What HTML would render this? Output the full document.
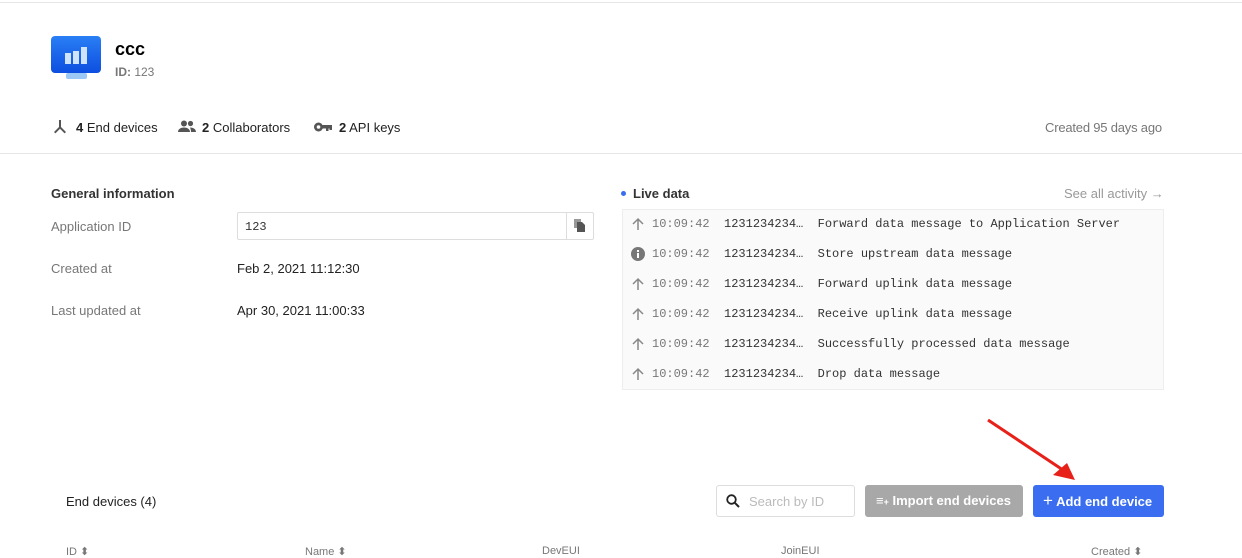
<!DOCTYPE html>
<html><head><meta charset="utf-8"><style>
*{margin:0;padding:0;box-sizing:border-box}
body{width:1242px;height:558px;overflow:hidden;background:#fff;font-family:"Liberation Sans",sans-serif;color:#222;position:relative}
.a{position:absolute;white-space:nowrap}
.mono{font-family:"Liberation Mono",monospace;font-size:12px;color:#333;white-space:pre}
.g{color:#777}
</style></head><body>
<div class="a" style="left:0;top:2px;width:1242px;height:1px;background:#e6e6e6"></div>
<div class="a" style="left:0;top:153px;width:1242px;height:1px;background:#e6e6e6"></div>
<svg class="a" style="left:51px;top:36px" width="51" height="44" viewBox="0 0 51 44">
<defs><linearGradient id="b" x1="0" y1="0" x2="0" y2="1"><stop offset="0" stop-color="#2a7ff5"/><stop offset="1" stop-color="#0d4ee0"/></linearGradient></defs>
<rect x="0" y="0" width="50" height="37" rx="4" fill="url(#b)"/>
<rect x="15" y="37" width="21" height="6" rx="2" fill="#9cc8f5"/>
<rect x="14" y="17" width="6" height="11" fill="#cfe3fb"/><rect x="22" y="15" width="6" height="13" fill="#cfe3fb"/><rect x="30" y="11" width="6" height="17" fill="#cfe3fb"/>
</svg>
<div class="a" style="left:115px;top:39px;font-size:18px;font-weight:bold;color:#000">ccc</div>
<div class="a g" style="left:115px;top:65px;font-size:12px"><b>ID:</b> 123</div>
<svg class="a" style="left:52px;top:119px" width="16" height="16" viewBox="0 0 16 16" fill="#555"><rect x="7" y="1" width="2" height="7"/><path d="M7 8L2 13l1.4 1.4L8 9.8l4.6 4.6L14 13 9 8z"/></svg>
<div class="a" style="left:76px;top:120px;font-size:13px"><b>4</b> End devices</div>
<svg class="a" style="left:178px;top:120px" width="18" height="13" viewBox="0 0 18 13" fill="#555"><circle cx="6" cy="3.5" r="3"/><circle cx="12.5" cy="3.5" r="2.6"/><path d="M0 12c0-3 3-4.5 6-4.5s6 1.5 6 4.5z"/><path d="M12 7.5c3 0 6 1.5 6 4.5h-5c0-2-0.5-3.3-1-4.5z"/></svg>
<div class="a" style="left:202px;top:120px;font-size:13px"><b>2</b> Collaborators</div>
<svg class="a" style="left:314px;top:122px" width="18" height="10" viewBox="0 0 18 10" fill="#555"><circle cx="4.5" cy="5" r="4.5"/><circle cx="4.5" cy="5" r="1.8" fill="#fff"/><rect x="8" y="3" width="10" height="3.5"/><rect x="12" y="5" width="2.5" height="4"/><rect x="15.5" y="5" width="2.5" height="3"/></svg>
<div class="a" style="left:339px;top:120px;font-size:13px"><b>2</b> API keys</div>
<div class="a g" style="left:1045px;top:120px;font-size:13px;letter-spacing:-0.2px">Created 95 days ago</div>

<div class="a" style="left:51px;top:186px;font-size:13px;font-weight:bold;color:#333">General information</div>
<div class="a g" style="left:51px;top:219px;font-size:13px">Application ID</div>
<div class="a" style="left:237px;top:212px;width:357px;height:28px;border:1px solid #ddd;border-radius:2px"></div>
<div class="a" style="left:566px;top:213px;width:1px;height:26px;background:#ddd"></div>
<div class="a mono" style="left:245px;top:220px">123</div>
<svg class="a" style="left:574px;top:219px" width="11" height="13" viewBox="0 0 11 13" fill="#555"><rect x="0" y="0" width="7" height="9" fill="#999"/><path d="M3 3h5l3 3v7H3z"/></svg>
<div class="a g" style="left:51px;top:261px;font-size:13px">Created at</div>
<div class="a" style="left:237px;top:261px;font-size:13px">Feb 2, 2021 11:12:30</div>
<div class="a g" style="left:51px;top:303px;font-size:13px">Last updated at</div>
<div class="a" style="left:237px;top:303px;font-size:13px">Apr 30, 2021 11:00:33</div>

<div class="a" style="left:621px;top:191px;width:5px;height:5px;border-radius:50%;background:#3a6df0"></div>
<div class="a" style="left:633px;top:186px;font-size:13px;font-weight:bold;color:#333">Live data</div>
<div class="a" style="left:1064px;top:186px;font-size:13px;color:#999">See all activity →</div>
<div class="a" style="left:622px;top:209px;width:542px;height:181px;background:#fafafa;border:1px solid #eee"></div>

<svg class="a" style="left:631px;top:217px" width="14" height="14" viewBox="0 0 14 14"><path d="M7 13V2M2 7l5-5 5 5" stroke="#888" stroke-width="1.5" fill="none"/></svg>
<svg class="a" style="left:631px;top:247px" width="14" height="14" viewBox="0 0 14 14"><circle cx="7" cy="7" r="7" fill="#777"/><rect x="6" y="6" width="2" height="5" fill="#fff"/><rect x="6" y="3" width="2" height="2" fill="#fff"/></svg>
<svg class="a" style="left:631px;top:277px" width="14" height="14" viewBox="0 0 14 14"><path d="M7 13V2M2 7l5-5 5 5" stroke="#888" stroke-width="1.5" fill="none"/></svg>
<svg class="a" style="left:631px;top:307px" width="14" height="14" viewBox="0 0 14 14"><path d="M7 13V2M2 7l5-5 5 5" stroke="#888" stroke-width="1.5" fill="none"/></svg>
<svg class="a" style="left:631px;top:337px" width="14" height="14" viewBox="0 0 14 14"><path d="M7 13V2M2 7l5-5 5 5" stroke="#888" stroke-width="1.5" fill="none"/></svg>
<svg class="a" style="left:631px;top:367px" width="14" height="14" viewBox="0 0 14 14"><path d="M7 13V2M2 7l5-5 5 5" stroke="#888" stroke-width="1.5" fill="none"/></svg>
<div class="a mono" style="left:652px;top:217px"><span class="g">10:09:42</span>  1231234234…  Forward data message to Application Server</div>
<div class="a mono" style="left:652px;top:247px"><span class="g">10:09:42</span>  1231234234…  Store upstream data message</div>
<div class="a mono" style="left:652px;top:277px"><span class="g">10:09:42</span>  1231234234…  Forward uplink data message</div>
<div class="a mono" style="left:652px;top:307px"><span class="g">10:09:42</span>  1231234234…  Receive uplink data message</div>
<div class="a mono" style="left:652px;top:337px"><span class="g">10:09:42</span>  1231234234…  Successfully processed data message</div>
<div class="a mono" style="left:652px;top:367px"><span class="g">10:09:42</span>  1231234234…  Drop data message</div>

<svg class="a" style="left:985px;top:418px" width="95" height="65" viewBox="0 0 95 65"><path d="M3 2L78 52" stroke="#e8201a" stroke-width="3"/><path d="M90 62L68 57L82 45z" fill="#e8201a"/></svg>

<div class="a" style="left:66px;top:494px;font-size:13px">End devices (4)</div>
<div class="a" style="left:716px;top:485px;width:139px;height:32px;border:1px solid #ddd;border-radius:3px"></div>
<svg class="a" style="left:726px;top:494px" width="14" height="14" viewBox="0 0 14 14"><circle cx="5.5" cy="5.5" r="4.3" stroke="#222" stroke-width="1.8" fill="none"/><path d="M8.7 8.7L13 13" stroke="#222" stroke-width="2"/></svg>
<div class="a" style="left:749px;top:494px;font-size:13px;color:#bbb">Search by ID</div>
<div class="a" style="left:865px;top:485px;width:158px;height:32px;background:#a8a8a8;border-radius:3px"></div>
<div class="a" style="left:876px;top:493px;font-size:13px;color:#fff;font-weight:bold">≡<span style="font-size:9px">+</span> Import end devices</div>
<div class="a" style="left:1033px;top:485px;width:131px;height:32px;background:#3a6df0;border-radius:3px"></div>
<div class="a" style="left:1043px;top:491px;font-size:13px;color:#fff;font-weight:bold"><span style="font-size:17px;font-weight:normal">+</span> Add end device</div>

<div class="a g" style="left:66px;top:545px;font-size:11px">ID ⬍</div>
<div class="a g" style="left:305px;top:545px;font-size:11px">Name ⬍</div>
<div class="a g" style="left:542px;top:545px;font-size:11px">DevEUI</div>
<div class="a g" style="left:781px;top:545px;font-size:11px">JoinEUI</div>
<div class="a g" style="left:1091px;top:545px;font-size:11px">Created ⬍</div>
</body></html>
